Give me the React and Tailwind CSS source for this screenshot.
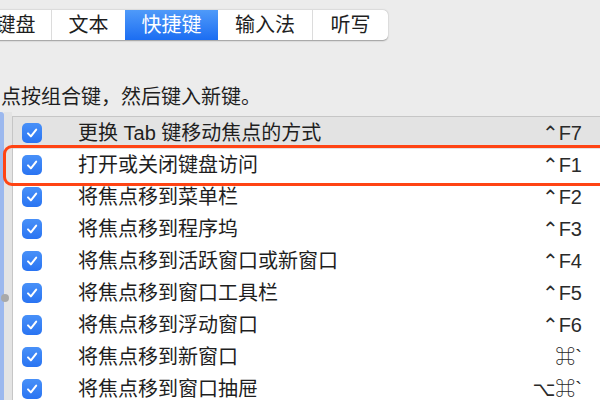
import React from 'react';

const tabs = [
  { label: '键盘', w: 'w-[72px]' },
  { label: '文本', w: 'w-[73px]' },
  { label: '快捷键', w: 'w-[93px]', active: true },
  { label: '输入法', w: 'w-[95px]' },
  { label: '听写', w: 'w-[75px]' },
];

const rows = [
  ['更换 Tab 键移动焦点的方式', '⌃F7'],
  ['打开或关闭键盘访问', '⌃F1'],
  ['将焦点移到菜单栏', '⌃F2'],
  ['将焦点移到程序坞', '⌃F3'],
  ['将焦点移到活跃窗口或新窗口', '⌃F4'],
  ['将焦点移到窗口工具栏', '⌃F5'],
  ['将焦点移到浮动窗口', '⌃F6'],
  ['将焦点移到新窗口', '⌘`'],
  ['将焦点移到窗口抽屉', '⌥⌘`'],
];

function Checkbox() {
  return (
    <div className="w-[20px] h-[20px] rounded-[5px] bg-gradient-to-b from-[#4890f8] to-[#2a74f2] flex items-center justify-center shrink-0">
      <svg width="14" height="14" viewBox="0 0 14 14" fill="none">
        <path d="M3 7.4 L5.9 10.4 L11.2 3.6" stroke="white" strokeWidth="2" strokeLinecap="round" strokeLinejoin="round" />
      </svg>
    </div>
  );
}

export default function App() {
  return (
    <div
      className="relative w-[600px] h-[400px] overflow-hidden bg-[#ececec] text-[#1e1e1e]"
      style={{ fontFamily: '"Liberation Sans", "Noto Sans CJK SC", "DejaVu Sans", sans-serif' }}
    >
      {/* tab bar */}
      <div className="pt-[10px] h-[40px]">
        <div className="ml-[-20px] flex w-max h-[30px] bg-white rounded-[5px] shadow-[0_0.5px_1.5px_rgba(0,0,0,0.35)] overflow-hidden">
          {tabs.map((t, i) => (
            <div
              key={t.label}
              className={
                t.active
                  ? `${t.w} flex items-center justify-center text-[20px] text-white bg-gradient-to-b from-[#4f9af9] to-[#1b6df2]`
                  : `${t.w} flex items-center justify-center text-[20px] text-[#1e1e1e] ${i < tabs.length - 1 && !tabs[i + 1].active ? 'border-r border-[#dcdcdc]' : ''}`
              }
            >
              {t.label}
            </div>
          ))}
        </div>
      </div>

      {/* instruction */}
      <div className="mt-[45px] h-[24px] pl-[1px] text-[20px] leading-[24px]">
        点按组合键，然后键入新键。
      </div>

      {/* list area */}
      <div className="mt-[3px] flex h-[300px]">
        <div className="w-[4px] bg-[#9cb8ee] rounded-tr-[3px]" />
        <div className="w-[8px] bg-[#e4e4e4]" />
        <div className="flex-1 mt-[4px] border-l border-t border-[#c6c6c6] bg-white">
          {rows.map(([label, key], i) => (
            <div
              key={label}
              className={`h-[32px] flex items-center ${i === 0 ? 'bg-[#e3e3e3]' : 'bg-white'}`}
            >
              <div className="w-[65px] pl-[9px]">
                <Checkbox />
              </div>
              <div className="flex-1 text-[20px] leading-[24px] text-[#1e1e1e]">{label}</div>
              <div className="pr-[18px] text-[20px] leading-[24px] text-[#2a2a2a]">{key}</div>
            </div>
          ))}
        </div>
      </div>

      {/* split handle */}
      <div className="absolute left-[1px] top-[294px] w-[8px] h-[8px] rounded-full bg-[#a9a9a9]" />

      {/* orange highlight */}
      <div className="absolute left-[3px] top-[145px] w-[620px] h-[41px] border-[3px] border-[#ff4414] rounded-[9px]" />
    </div>
  );
}
